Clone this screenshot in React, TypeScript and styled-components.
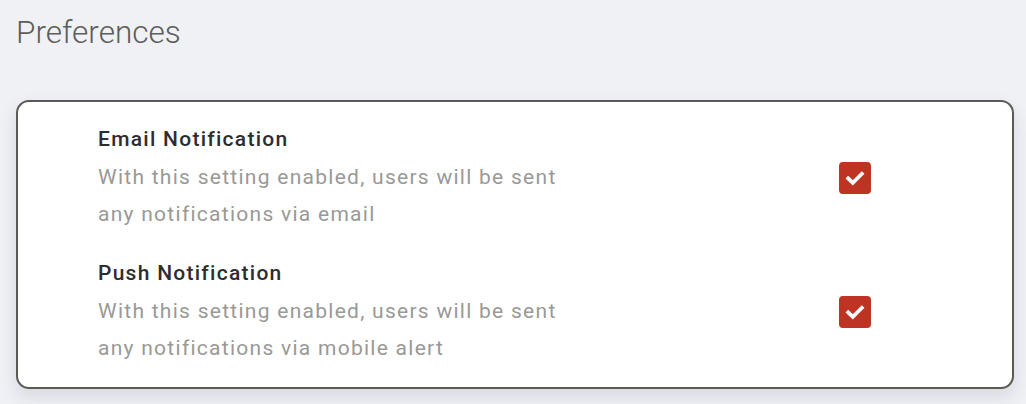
import styled, { createGlobalStyle } from "styled-components";

const GlobalStyle = createGlobalStyle`
  body {
    margin: 0;
    background: #f0f1f5;
    font-family: Roboto, "Liberation Sans", sans-serif;
  }
`;

const Page = styled.div`
  padding: 14px 12px 16px 16px;
`;

const Heading = styled.h2`
  margin: 0 0 48px;
  font-size: 31.5px;
  font-weight: 300;
  line-height: 38px;
  color: #5d5d59;
`;

const Card = styled.section`
  background: #fff;
  border: 2px solid #5a5b55;
  border-radius: 13px;
  box-shadow: 0 8px 18px rgba(40, 45, 70, 0.12);
  padding: 20px 141px 20px 80px;
  display: flex;
  flex-direction: column;
  gap: 23px;
`;

const Row = styled.div`
  display: grid;
  grid-template-columns: 1fr auto;
  align-items: center;
`;

const Text = styled.div`
  max-width: 480px;
  letter-spacing: 1.27px;
`;

const Title = styled.div`
  font-size: 21px;
  font-weight: 500;
  line-height: 34px;
  color: #2d2d2d;
  margin-bottom: 3px;
`;

const Description = styled.div`
  font-size: 21px;
  line-height: 37px;
  color: #999996;
`;

const Checkbox = styled.span<{ $checked?: boolean }>`
  width: 32px;
  height: 32px;
  border-radius: 4px;
  background: ${(p) => (p.$checked ? "#bf3322" : "#fff")};
  display: flex;
  align-items: center;
  justify-content: center;
`;

const CheckIcon = () => (
  <svg width="22" height="22" viewBox="0 0 20 20">
    <path
      d="M3.8 10.4 L8 14.4 L16.2 6.2"
      fill="none"
      stroke="#fff"
      strokeWidth="3.4"
      strokeLinecap="square"
    />
  </svg>
);

const settings = [
  {
    title: "Email Notification",
    text: "With this setting enabled, users will be sent any notifications via email",
  },
  {
    title: "Push Notification",
    text: "With this setting enabled, users will be sent any notifications via mobile alert",
  },
];

export default function App() {
  return (
    <>
      <GlobalStyle />
      <Page>
        <Heading>Preferences</Heading>
        <Card>
          {settings.map((s) => (
            <Row key={s.title}>
              <Text>
                <Title>{s.title}</Title>
                <Description>{s.text}</Description>
              </Text>
              <Checkbox $checked>
                <CheckIcon />
              </Checkbox>
            </Row>
          ))}
        </Card>
      </Page>
    </>
  );
}
